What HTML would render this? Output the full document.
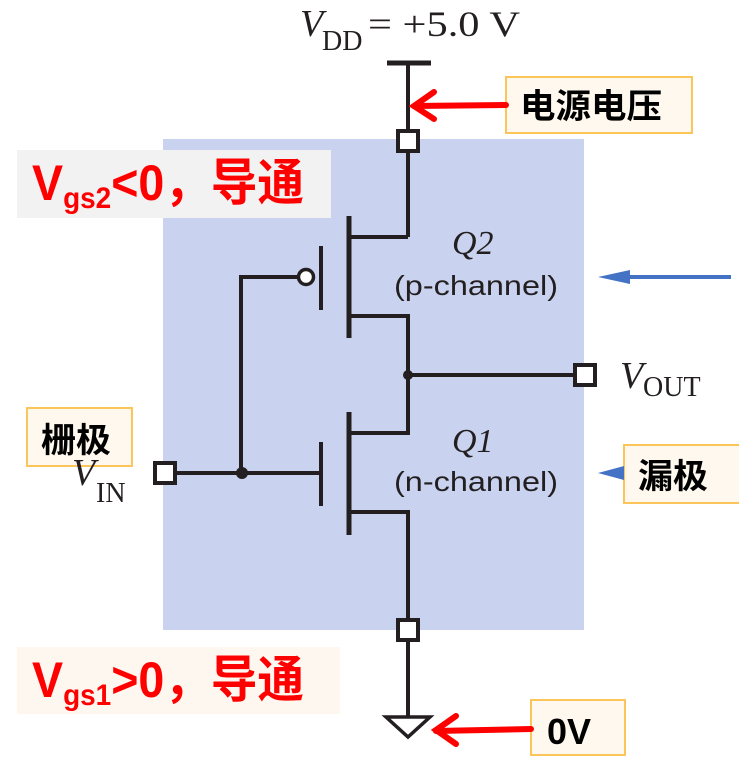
<!DOCTYPE html>
<html><head><meta charset="utf-8"><style>
html,body{margin:0;padding:0;background:#fff;width:739px;height:770px;overflow:hidden}
svg{display:block}
.cn{font-family:"Liberation Sans","Noto Sans CJK SC",sans-serif;font-weight:bold}
.ser{font-family:"Liberation Serif",serif}
</style></head><body>
<svg width="739" height="770" viewBox="0 0 739 770">
<rect x="163" y="139" width="421" height="491" fill="#c9d3ef"/>
<rect x="17" y="150" width="314" height="68" fill="#f2f2f2"/>
<rect x="17" y="647" width="323" height="67" fill="#fdf7f0"/>
<rect x="506" y="77" width="186" height="56" fill="#fff8ef" stroke="#fcc55a" stroke-width="2"/>
<rect x="27" y="408" width="105" height="58" fill="#fff8ef" stroke="#fcc55a" stroke-width="2"/>
<rect x="624" y="445" width="118" height="58" fill="#fff8ef" stroke="#fcc55a" stroke-width="2"/>
<rect x="531" y="700" width="94" height="55" fill="#fff8ef" stroke="#fcc55a" stroke-width="2"/>
<g stroke="#231f20" stroke-width="4" fill="none">
<line x1="387" y1="63" x2="431" y2="63" stroke-width="5"/>
<line x1="408" y1="63" x2="408" y2="237"/>
<polyline points="408,237 351,237"/>
<line x1="349" y1="216" x2="349" y2="338" stroke-width="5"/>
<line x1="321" y1="246" x2="321" y2="310"/>
<polyline points="298,277 241,277 241,473"/>
<circle cx="306" cy="277" r="7.5" fill="#fff" stroke-width="3.5"/>
<polyline points="351,316 408,316 408,433 351,433"/>
<line x1="408" y1="375" x2="573" y2="375"/>
<line x1="349" y1="412" x2="349" y2="535" stroke-width="5"/>
<line x1="321" y1="442" x2="321" y2="506"/>
<line x1="177" y1="473" x2="321" y2="473"/>
<polyline points="351,512 408,512 408,717"/>
<polygon points="386,717 430,717 408,737" stroke-width="3.5" fill="#fff"/>
</g>
<circle cx="408" cy="375" r="5" fill="#231f20"/>
<circle cx="242" cy="473" r="6" fill="#231f20"/>
<g fill="#fff" stroke="#231f20" stroke-width="4">
<rect x="398" y="131" width="20" height="20"/>
<rect x="398" y="620" width="20" height="20"/>
<rect x="575" y="365" width="20" height="20"/>
<rect x="155" y="463" width="20" height="20"/>
</g>
<g stroke="#f00" stroke-width="6" fill="none" stroke-linecap="round">
<line x1="506" y1="105" x2="414" y2="106"/>
<polyline points="434,92 414,106 434,119"/>
<line x1="531" y1="729" x2="436" y2="731"/>
<polyline points="456,716 436,730 456,744"/>
</g>
<line x1="620" y1="277" x2="731" y2="277" stroke="#4472c4" stroke-width="4"/>
<polygon points="598,277 630,270 630,284" fill="#4472c4"/>
<polygon points="598,473 624,466 624,480" fill="#4472c4"/>
<g class="ser" fill="#231f20">
<text x="300" y="36" font-size="38" font-style="italic">V</text>
<text x="322" y="50" font-size="28">DD</text>
<text x="368" y="36" font-size="36" textLength="152" lengthAdjust="spacingAndGlyphs">= +5.0 V</text>
<text x="452" y="254" font-size="34" font-style="italic">Q2</text>
<text x="452" y="452" font-size="34" font-style="italic">Q1</text>
<text x="620" y="388" font-size="38" font-style="italic">V</text>
<text x="643" y="396" font-size="28">OUT</text>
<text x="72" y="485" font-size="38" font-style="italic">V</text>
<text x="96" y="502" font-size="28">IN</text>
</g>
<g font-family="Liberation Sans,sans-serif" fill="#231f20" font-size="28">
<text x="394" y="295" textLength="164" lengthAdjust="spacingAndGlyphs">(p-channel)</text>
<text x="394" y="491" textLength="164" lengthAdjust="spacingAndGlyphs">(n-channel)</text>
</g>
<g class="cn" fill="#000" font-size="34">
<text x="520" y="118" textLength="142" lengthAdjust="spacingAndGlyphs">电源电压</text>
<text x="41" y="452" textLength="70" lengthAdjust="spacingAndGlyphs">栅极</text>
<text x="638" y="488" textLength="70" lengthAdjust="spacingAndGlyphs">漏极</text>
<text x="547" y="744" font-size="36">0V</text>
</g>
<g class="cn" fill="#f00">
<text x="32" y="200" font-size="50" textLength="272" lengthAdjust="spacingAndGlyphs">V<tspan font-size="30" dy="8">gs2</tspan><tspan font-size="50" dy="-8">&lt;0，导通</tspan></text>
<text x="32" y="697" font-size="50" textLength="272" lengthAdjust="spacingAndGlyphs">V<tspan font-size="30" dy="8">gs1</tspan><tspan font-size="50" dy="-8">&gt;0，导通</tspan></text>
</g>
</svg>
</body></html>
